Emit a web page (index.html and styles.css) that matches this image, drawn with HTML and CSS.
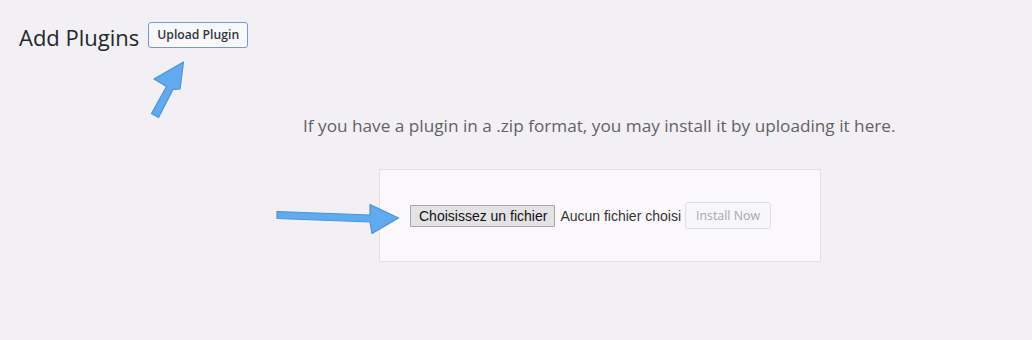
FILE: index.html
```html
<!DOCTYPE html>
<html lang="en">
<head>
  <meta charset="UTF-8">
  <title>Add Plugins</title>
  <link rel="stylesheet" href="styles.css">
</head>
<body>

  <div class="wrap">
    <div class="page-head">
      <h1>Add Plugins</h1>
      <button type="button" class="upload-btn">Upload Plugin</button>
    </div>

    <p class="install-help">If you have a plugin in a .zip format, you may install it by uploading it here.</p>

    <div class="upload-box">
      <form class="upload-form">
        <label class="file-btn">Choisissez un fichier</label>
        <span class="file-name">Aucun fichier choisi</span>
        <button type="button" class="install-btn" disabled>Install Now</button>
      </form>
    </div>
  </div>

  <!-- annotation arrows -->
  <svg class="arrow arrow-up" width="60" height="75" viewBox="0 0 60 75">
    <path d="M11.5 63.5 L26.5 36.5 L14 29 L43.5 12 L40 39 L33 39.5 L18.5 67.5 Z" fill="#62aaf0" stroke="#4a93da" stroke-width="1.2" stroke-linejoin="round"/>
  </svg>
  <svg class="arrow arrow-right" width="130" height="40" viewBox="0 0 130 40">
    <path d="M3 12.5 L96 16 L96 5.5 L124.5 19 L98 34.5 L96 23 L3 19.5 Z" fill="#62aaf0" stroke="#4a93da" stroke-width="1.2" stroke-linejoin="round"/>
  </svg>

</body>
</html>
```

FILE: styles.css
```css
* {
  margin: 0;
  padding: 0;
  box-sizing: border-box;
}

body {
  background: #f3f0f5;
  font-family: 'Open Sans', sans-serif;
  color: #1d2327;
  height: 340px;
  overflow: hidden;
  position: relative;
}

.wrap {
  padding: 21px 0 0 19px;
}

.page-head {
  display: flex;
  align-items: center;
  gap: 9px;
}

.page-head h1 {
  font-family: 'Open Sans', sans-serif;
  font-size: 22px;
  font-weight: 400;
  color: #23282d;
  line-height: 1;
  margin-top: 5px;
}

.upload-btn {
  height: 26px;
  padding: 0 8px;
  background: #f8f8fb;
  border: 1px solid #6f9ccf;
  border-radius: 3px;
  font-family: 'Open Sans', sans-serif;
  font-size: 12.2px;
  font-weight: 600;
  color: #32373c;
}

.install-help {
  margin: 66px 0 0 284px;
  width: 600px;
  font-size: 17.2px;
  line-height: 24px;
  color: #626262;
  white-space: nowrap;
}

.upload-box {
  margin: 31px 0 0 360px;
  width: 442px;
  height: 93px;
  background: #faf8fb;
  border: 1px solid #e2e0e6;
  display: flex;
  align-items: center;
  padding-left: 30px;
}

.upload-form {
  display: flex;
  align-items: center;
}

.file-btn {
  display: inline-block;
  height: 22px;
  line-height: 20px;
  padding: 0 7px 0 8px;
  background: #e3e3e5;
  border: 1px solid #a7a7a9;
  border-radius: 1px;
  font-family: 'Liberation Sans', Arial, sans-serif;
  font-size: 14px;
  color: #111;
}

.file-name {
  margin-left: 5px;
  font-family: 'Liberation Sans', Arial, sans-serif;
  font-size: 14px;
  color: #333;
}

.install-btn {
  margin-left: 4px;
  height: 27px;
  width: 86px;
  background: #f7f6f8;
  border: 1px solid #dedde2;
  border-radius: 3px;
  font-family: 'Open Sans', sans-serif;
  font-size: 12.4px;
  color: #a7a7ab;
}

.arrow {
  position: absolute;
}

.arrow-up {
  left: 140px;
  top: 50px;
}

.arrow-right {
  left: 274px;
  top: 199px;
}
```
